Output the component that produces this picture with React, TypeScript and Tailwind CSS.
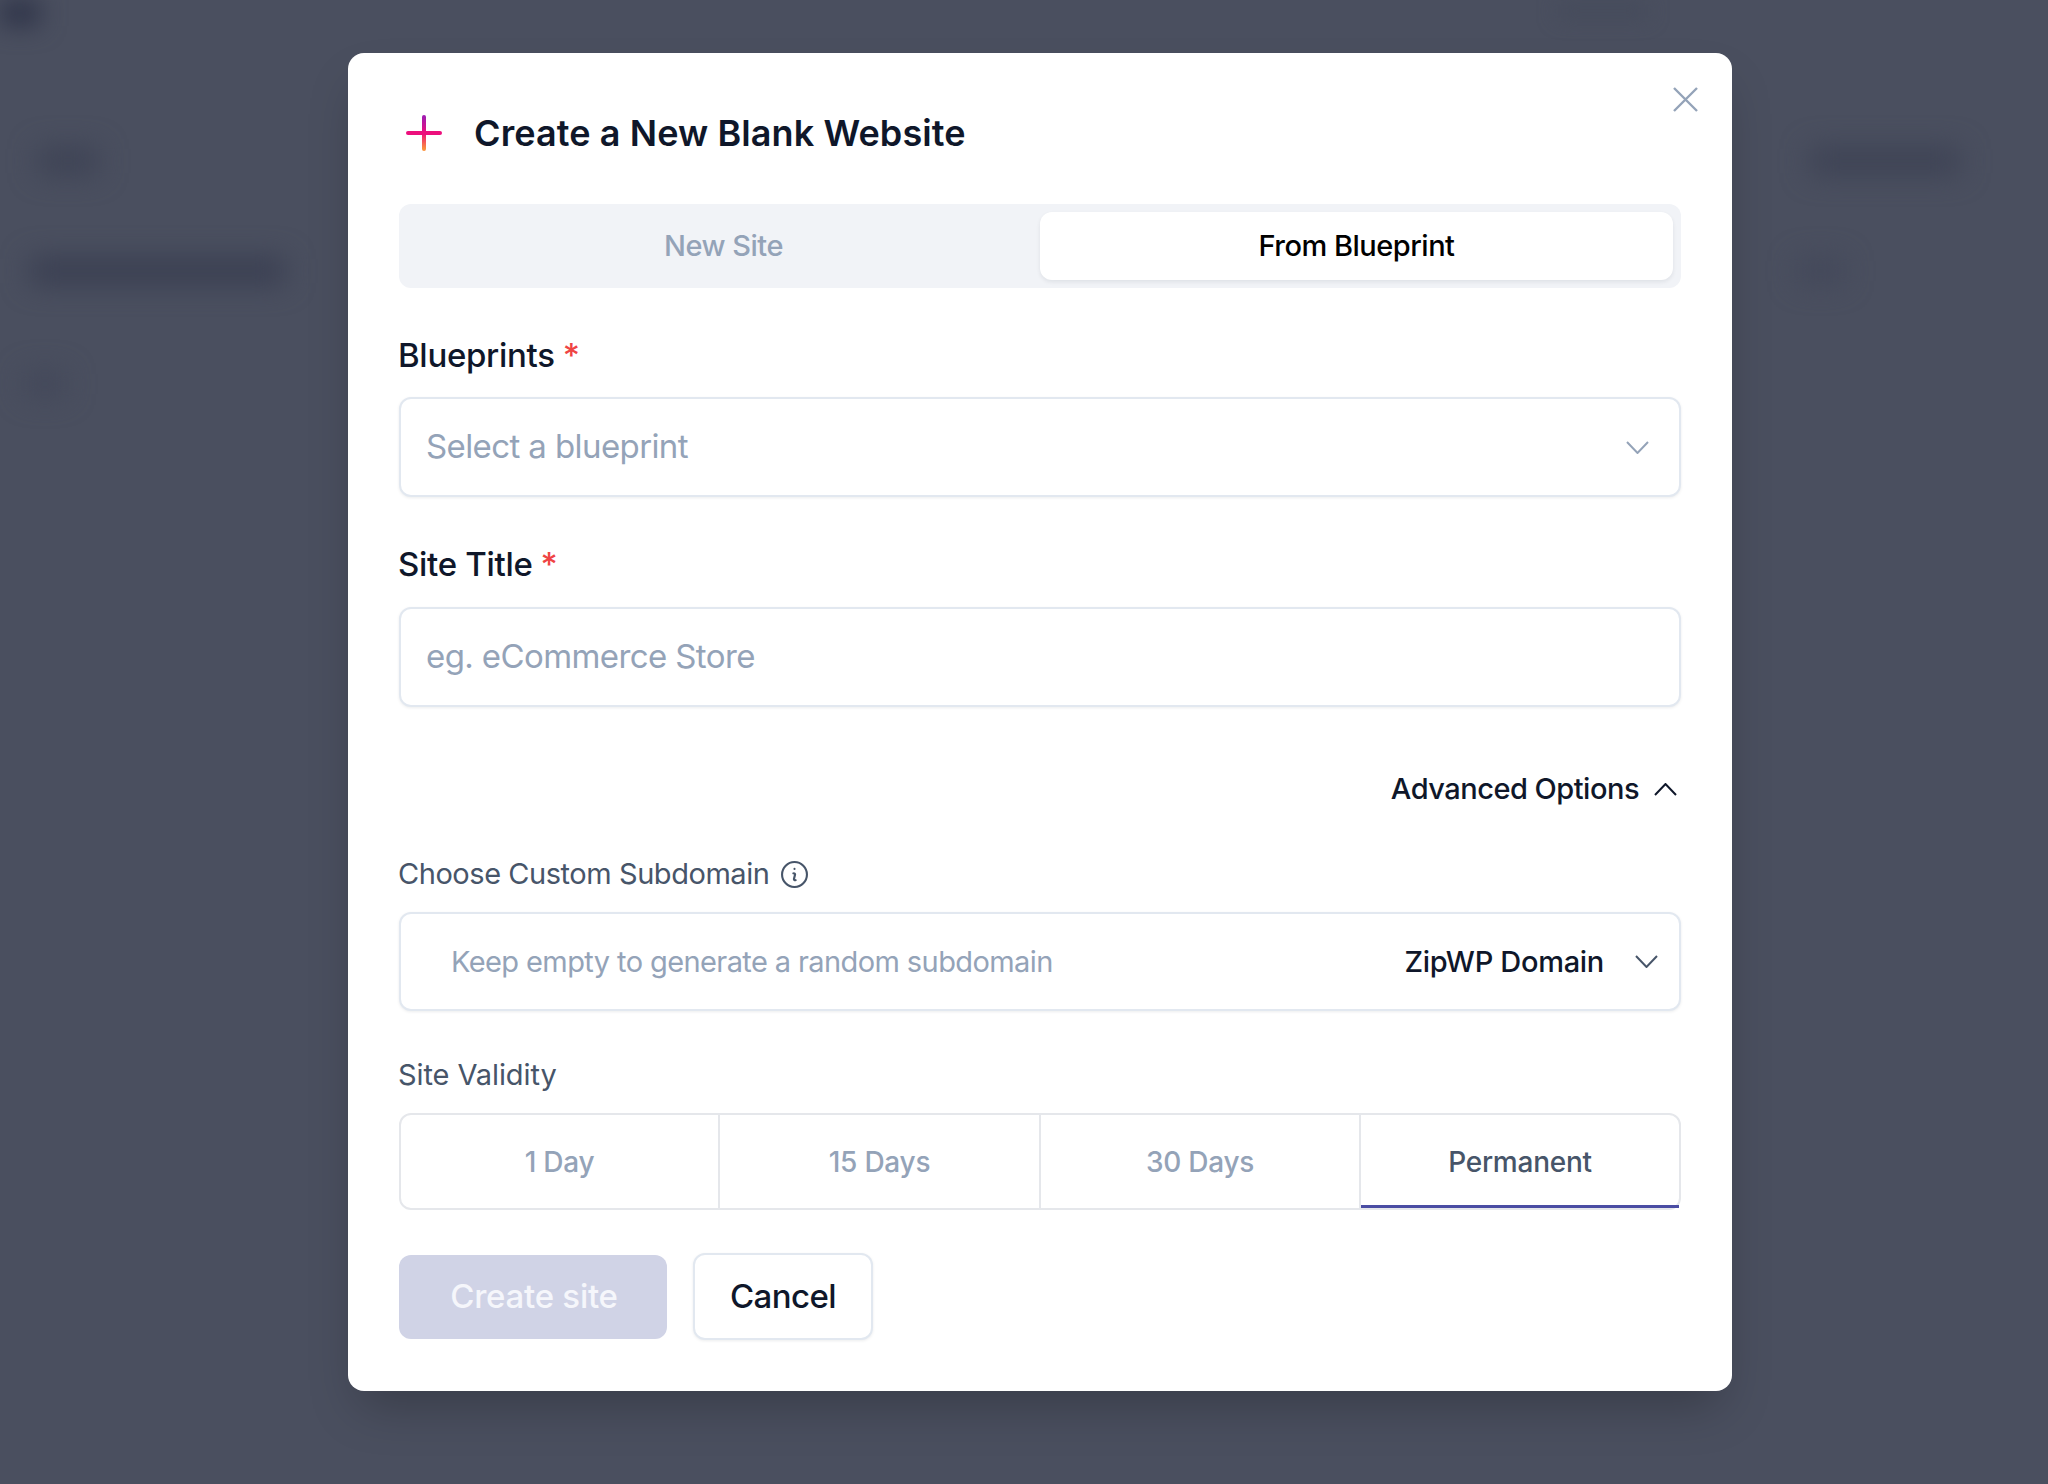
const font = "[font-family:Inter,'Liberation_Sans',sans-serif]";

function Chevron({ up, className }: { up?: boolean; className: string }) {
  return (
    <svg viewBox="0 0 23 13" fill="none" stroke="currentColor" strokeWidth="2" className={className}>
      <path d={up ? "M1 12 11.5 1 22 12" : "M1 1 11.5 12 22 1"} />
    </svg>
  );
}

function Label({ children }: { children: React.ReactNode }) {
  return (
    <div className="-ml-[1px] flex h-[40px] items-center gap-[8px] text-[33px] font-medium tracking-[-0.3px] text-[#0f172a]">
      <span>{children}</span>
      <span className="text-[#ef4444]">*</span>
    </div>
  );
}

const boxCls = "flex items-center rounded-[12px] border-2 border-[#e2e8f0] bg-white shadow-[0_1px_3px_rgba(15,23,42,0.08)]";

function Background() {
  return (
    <div className="h-[1484px] w-full overflow-hidden bg-[#4a4f5f]">
      <div className="flex h-[30px] justify-between">
        <div className="h-[26px] w-[40px] bg-[#2f3449] blur-[12px]" />
        <div className="mr-[400px] mt-[5px] h-[12px] w-[90px] bg-[#444a5a] blur-[10px]" />
      </div>
      <div className="mt-[118px] flex items-start justify-between">
        <div className="ml-[38px] h-[26px] w-[60px] bg-[#3d4254] blur-[14px]" />
        <div className="mr-[88px] h-[26px] w-[150px] bg-[#3d4254] blur-[14px]" />
      </div>
      <div className="mt-[84px] flex items-center justify-between">
        <div className="ml-[30px] h-[26px] w-[255px] bg-[#393e51] blur-[14px]" />
        <div className="mr-[205px] h-[24px] w-[45px] bg-[#424759] blur-[14px]" />
      </div>
      <div className="ml-[25px] mt-[88px] h-[24px] w-[40px] bg-[#424759] blur-[14px]" />
    </div>
  );
}

export default function App() {
  return (
    <div className={`relative ${font}`}>
      <Background />
      <div className="absolute inset-0 pl-[348px] pt-[53px]">
        <div className="relative h-[1338px] w-[1384px] rounded-[16px] bg-white px-[51px] pt-[52px] shadow-[0_25px_50px_-12px_rgba(0,0,0,0.25)]">
          <button className="absolute right-[34px] top-[34px] text-[#94a3b8]">
            <svg viewBox="0 0 25 25" fill="none" stroke="currentColor" strokeWidth="2.4" className="block h-[25px] w-[25px]">
              <path d="M1 1 24 24M24 1 1 24" />
            </svg>
          </button>

          <div className="flex h-[56px] items-center">
            <svg viewBox="0 0 36 36" fill="none" strokeWidth="4" strokeLinecap="round" className="ml-[7px] h-[36px] w-[36px]">
              <defs>
                <linearGradient id="plusV" x1="18" y1="2" x2="18" y2="34" gradientUnits="userSpaceOnUse">
                  <stop offset="0" stopColor="#a21caf" />
                  <stop offset="0.5" stopColor="#ec0f7c" />
                  <stop offset="1" stopColor="#fb923c" />
                </linearGradient>
              </defs>
              <path d="M18 2V34" stroke="url(#plusV)" />
              <path d="M2 18H34" stroke="#ec0f7c" />
            </svg>
            <h1 className="ml-[32px] text-[36px] font-semibold tracking-[0.1px] text-[#0f172a]">Create a New Blank Website</h1>
          </div>

          <div className="mt-[43px] grid h-[84px] grid-cols-2 rounded-[12px] bg-[#f1f3f7] p-[8px] text-[29px] font-medium tracking-[-0.5px]">
            <button className="text-[#94a3b8]">New Site</button>
            <button className="rounded-[12px] bg-white text-black shadow-[0_2px_4px_rgba(15,23,42,0.08)]">From Blueprint</button>
          </div>

          <div className="mt-[48px]">
            <Label>Blueprints</Label>
          </div>
          <div className={`mt-[21px] h-[100px] justify-between pl-[25px] pr-[30px] text-[33px] text-[#94a3b8] ${boxCls}`}>
            <span className="tracking-[-0.6px]">Select a blueprint</span>
            <Chevron className="h-[13px] w-[23px] text-[#94a3b8]" />
          </div>

          <div className="mt-[48px]">
            <Label>Site Title</Label>
          </div>
          <div className={`mt-[22px] h-[100px] pl-[25px] text-[33px] text-[#94a3b8] ${boxCls}`}>
            <span className="tracking-[-0.6px]">eg. eCommerce Store</span>
          </div>

          <div className="mt-[62px] flex h-[40px] items-center justify-end gap-[15px] pr-[4px] text-[29px] font-medium tracking-[-0.5px] text-[#0f172a]">
            <span>Advanced Options</span>
            <Chevron up className="h-[13px] w-[23px] text-[#0f172a]" />
          </div>

          <div className="-ml-[1px] mt-[45px] flex h-[40px] items-center gap-[12px] text-[29px] tracking-[-0.45px] text-[#475569]">
            <span>Choose Custom Subdomain</span>
            <svg viewBox="3 3 18 18" fill="none" stroke="currentColor" strokeWidth="1.4" strokeLinecap="round" strokeLinejoin="round" className="h-[27px] w-[27px]">
              <path d="m11.25 11.25.041-.02a.75.75 0 0 1 1.063.852l-.708 2.836a.75.75 0 0 0 1.063.853l.041-.021M20.3 12a8.3 8.3 0 1 1-16.6 0 8.3 8.3 0 0 1 16.6 0Zm-8.3-3.75h.008v.008H12V8.25Z" />
            </svg>
          </div>
          <div className={`mt-[18px] h-[99px] justify-between pl-[50px] pr-[21px] ${boxCls}`}>
            <span className="text-[29px] tracking-[-0.6px] text-[#94a3b8]">Keep empty to generate a random subdomain</span>
            <div className="flex items-center gap-[31px]">
              <span className="text-[29px] font-medium tracking-[-0.3px] text-[#0f172a]">ZipWP Domain</span>
              <Chevron className="h-[13px] w-[23px] text-[#475569]" />
            </div>
          </div>

          <div className="-ml-[1px] mt-[44px] flex h-[40px] items-center text-[29px] tracking-[-0.1px] text-[#475569]">Site Validity</div>
          <div className="mt-[18px] grid h-[97px] grid-cols-[319px_321px_320px_1fr] divide-x-2 divide-[#e5e7eb] rounded-[12px] border-2 border-[#e5e7eb] bg-white text-[28px] font-medium tracking-[-0.25px] text-[#94a3b8]">
            <button>1 Day</button>
            <button>15 Days</button>
            <button>30 Days</button>
            <button className="text-[#475569] shadow-[inset_0_-3px_0_#4a4da3]">Permanent</button>
          </div>

          <div className="mt-[43px] flex items-start gap-[26px]">
            <button className="mt-[2px] h-[84px] w-[268px] rounded-[12px] bg-[#d0d3e6] pl-[2px] text-[33px] font-medium tracking-[-0.25px] text-[#f5f6fb]">Create site</button>
            <button className={`h-[87px] w-[180px] justify-center text-[33px] font-medium tracking-[-0.6px] text-[#0f172a] ${boxCls}`}>Cancel</button>
          </div>
        </div>
      </div>
    </div>
  );
}
